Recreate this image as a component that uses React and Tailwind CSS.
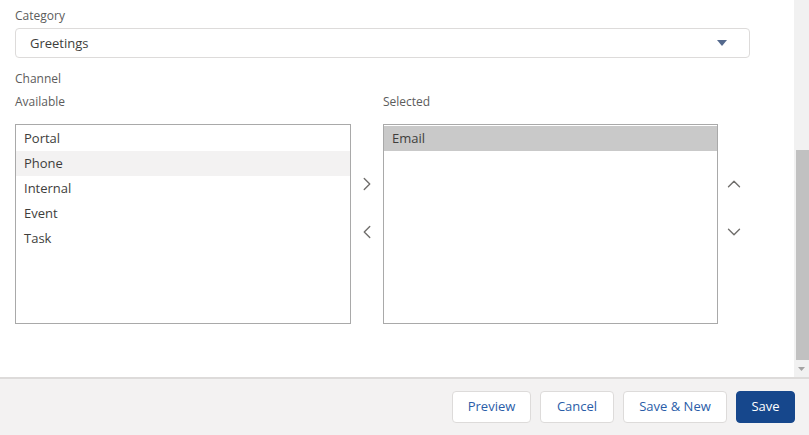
import { ChevronRight, ChevronLeft, ChevronUp, ChevronDown } from 'lucide-react'

const available = ['Portal', 'Phone', 'Internal', 'Event', 'Task']

function ListBox({ items, active, activeClass }) {
  return (
    <div className="h-[200px] border border-[#a9a9a9] bg-white py-px">
      {items.map((item) => (
        <div
          key={item}
          className={`h-[25px] flex items-center pl-2 text-[13px] text-[#3e3e3c] ${item === active ? activeClass : ''}`}
        >
          {item}
        </div>
      ))}
    </div>
  )
}

function Button({ children, primary, className = '' }) {
  return (
    <button
      className={`h-8 rounded-[4px] border text-[13px] ${
        primary
          ? 'bg-[#16478c] border-[#16478c] text-white'
          : 'bg-white border-[#dddbda] text-[#2a5da8]'
      } ${className}`}
    >
      {children}
    </button>
  )
}

export default function App() {
  return (
    <div
      className="w-[809px] h-[435px] flex flex-col bg-white overflow-hidden"
      style={{ fontFamily: '"Open Sans", "Liberation Sans", sans-serif' }}
    >
      <div className="flex flex-1 min-h-0">
        {/* Form */}
        <div className="w-[794px] pl-[15px] pt-[7px]">
          <div className="text-[12px] text-[#5c5c5c] leading-[18px]">Category</div>
          <div className="mt-[3px] w-[735px] h-[30px] border border-[#dddbda] rounded-[4px] flex items-center justify-between pl-[14px] pr-[22px]">
            <span className="text-[13px] text-[#3e3e3c] pt-px">Greetings</span>
            <svg width="10" height="6" viewBox="0 0 10 6">
              <path d="M0 0 L10 0 L5 6 Z" fill="#54698d" />
            </svg>
          </div>
          <div className="mt-[12px] text-[12px] text-[#5c5c5c] leading-[18px]">Channel</div>
          <div className="mt-[5px] flex">
            <div className="w-[336px]">
              <div className="text-[12px] text-[#5c5c5c] leading-[18px]">Available</div>
              <div className="mt-[13px]">
                <ListBox items={available} active="Phone" activeClass="bg-[#f3f2f2]" />
              </div>
            </div>
            <div className="w-[32px] pt-[80px] flex flex-col items-center gap-[26px] text-[#706e6b]">
              <ChevronRight size={22} strokeWidth={1.5} />
              <ChevronLeft size={22} strokeWidth={1.5} />
            </div>
            <div className="w-[335px]">
              <div className="text-[12px] text-[#5c5c5c] leading-[18px]">Selected</div>
              <div className="mt-[13px]">
                <ListBox items={['Email']} active="Email" activeClass="bg-[#c9c9c9]" />
              </div>
            </div>
            <div className="w-[32px] pt-[80px] flex flex-col items-center gap-[26px] text-[#706e6b]">
              <ChevronUp size={22} strokeWidth={1.5} />
              <ChevronDown size={22} strokeWidth={1.5} />
            </div>
          </div>
        </div>
        {/* Scrollbar */}
        <div className="w-[15px] bg-[#f1f1f1] flex flex-col">
          <div className="h-[150px]" />
          <div className="h-[210px] ml-[2px] bg-[#c1c1c1]" />
          <div className="flex-1 flex items-center justify-center">
            <svg width="7" height="4" viewBox="0 0 7 4">
              <path d="M0 0 L7 0 L3.5 4 Z" fill="#a3a3a3" />
            </svg>
          </div>
        </div>
      </div>
      {/* Footer */}
      <div className="h-[58px] border-t-2 border-[#dddbda] bg-[#f3f2f2] flex items-start justify-end gap-[9px] pt-[12px] pr-[14px]">
        <Button className="w-[79px]">Preview</Button>
        <Button className="w-[74px]">Cancel</Button>
        <Button className="w-[104px]">Save &amp; New</Button>
        <Button primary className="w-[59px]">Save</Button>
      </div>
    </div>
  )
}
